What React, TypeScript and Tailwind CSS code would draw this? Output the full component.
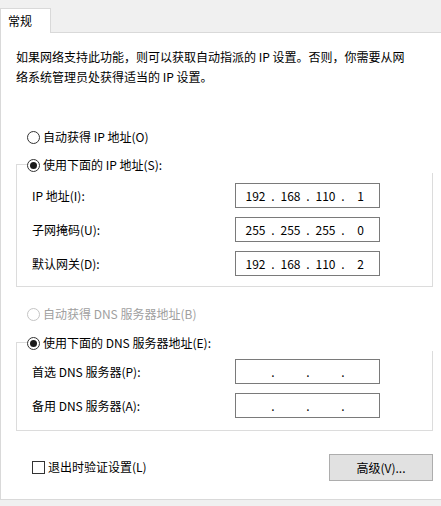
import React from "react";

// --- small win32-ish controls ---
const Radio: React.FC<{ checked?: boolean; disabled?: boolean; label: string }> = ({
  checked,
  disabled,
  label,
}) => (
  <div className="flex items-center h-4 gap-[3px] bg-white">
    <span
      className={`w-[13px] h-[13px] rounded-full border bg-white flex items-center justify-center ${
        disabled ? "border-[#c4c4c4]" : "border-[#333333]"
      }`}
    >
      {checked && <span className="w-[7px] h-[7px] rounded-full bg-[#1a1a1a]" />}
    </span>
    <span className={disabled ? "text-[#a0a0a0]" : "text-black"}>{label}</span>
  </div>
);

const IpBox: React.FC<{ parts: string[] }> = ({ parts }) => (
  <div className="w-[145px] h-[25px] border border-[#7a7a7a] bg-white flex items-center pl-[5px]">
    {parts.map((p, i) => (
      <React.Fragment key={i}>
        {i > 0 && <span className="w-[6px] text-center">.</span>}
        <span className="w-[29px] text-center">{p}</span>
      </React.Fragment>
    ))}
  </div>
);

const Row: React.FC<{ label: string; parts: string[] }> = ({ label, parts }) => (
  <div className="grid grid-cols-[203px_145px] items-center h-[25px]">
    <span>{label}</span>
    <IpBox parts={parts} />
  </div>
);

const GroupBox: React.FC<{
  header: React.ReactNode;
  className?: string;
  children: React.ReactNode;
}> = ({ header, className, children }) => (
  <div className={`relative w-[417px] border border-[#dcdcdc] pl-[15px] flex flex-col gap-[9px] ${className ?? ""}`}>
    <div className="absolute top-[-8px] left-[10px] right-[-1px] bg-white">{header}</div>
    {children}
  </div>
);

export default function App() {
  return (
    <div className="w-[441px] h-[506px] bg-[#f0f0f0] pt-[8px] flex flex-col text-[12px] leading-[20px] text-black font-['Microsoft_YaHei','Noto_Sans_CJK_SC',sans-serif] overflow-hidden">
      {/* tab */}
      <div className="relative z-10 -mb-px w-[51px] h-[25px] bg-white border border-b-0 border-[#d9d9d9] flex items-center pl-[7px]">
        常规
      </div>

      {/* page */}
      <div className="h-[468px] bg-white border-t border-l border-b border-[#d9d9d9] pl-[15px] pt-[14px] flex flex-col">
        <p>
          如果网络支持此功能，则可以获取自动指派的 IP 设置。否则，你需要从网
          <br />
          络系统管理员处获得适当的 IP 设置。
        </p>

        <div className="mt-[42px] ml-[11px]">
          <Radio label="自动获得 IP 地址(O)" />
        </div>

        <GroupBox
          className="mt-[19px] pt-[18px] pb-[10px]"
          header={<Radio checked label="使用下面的 IP 地址(S):" />}
        >
          <Row label="IP 地址(I):" parts={["192", "168", "110", "1"]} />
          <Row label="子网掩码(U):" parts={["255", "255", "255", "0"]} />
          <Row label="默认网关(D):" parts={["192", "168", "110", "2"]} />
        </GroupBox>

        <div className="mt-[19px] ml-[11px]">
          <Radio disabled label="自动获得 DNS 服务器地址(B)" />
        </div>

        <GroupBox
          className="mt-[20px] pt-[16px] pb-[12px]"
          header={<Radio checked label="使用下面的 DNS 服务器地址(E):" />}
        >
          <Row label="首选 DNS 服务器(P):" parts={["", "", "", ""]} />
          <Row label="备用 DNS 服务器(A):" parts={["", "", "", ""]} />
        </GroupBox>

        <div className="mt-[23px] w-[417px] flex justify-between items-start">
          <div className="ml-[16px] mt-[1px] flex items-center gap-[3px] h-[24px]">
            <span className="w-[13px] h-[13px] border border-[#333333] bg-white" />
            <span>退出时验证设置(L)</span>
          </div>
          <button className="w-[104px] h-[27px] bg-[#e1e1e1] border border-[#adadad] flex items-center justify-center">
            高级(V)...
          </button>
        </div>
      </div>
    </div>
  );
}
